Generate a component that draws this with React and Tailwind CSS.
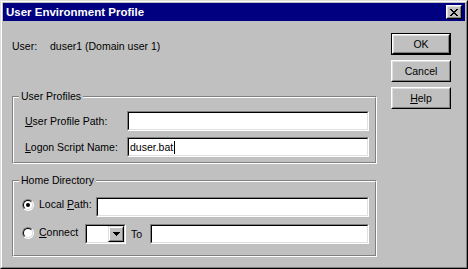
import React from "react";

const FONT = "font-['Liberation_Sans',Arial,sans-serif]";

// sunken 2px text field
function Field({ width, children }) {
  return (
    <div
      className={`h-[20px] shrink-0 border border-t-[#808080] border-l-[#808080] border-b-white border-r-white`}
      style={{ width }}
    >
      <div className="h-full border border-t-black border-l-black border-b-[#dfdfdf] border-r-[#dfdfdf] bg-white flex items-center pl-[1px] text-black">
        {children}
      </div>
    </div>
  );
}

function Radio({ checked }) {
  return (
    <span className="block w-[12px] h-[12px] shrink-0 rounded-full border border-t-[#808080] border-l-[#808080] border-b-white border-r-white">
      <span className="flex w-full h-full items-center justify-center rounded-full border border-t-black border-l-black border-b-[#dfdfdf] border-r-[#dfdfdf] bg-white">
        {checked && <span className="block w-[4px] h-[4px] rounded-full bg-black" />}
      </span>
    </span>
  );
}

function Button({ children, isDefault }) {
  const bevel = (
    <div className="h-full border border-t-white border-l-white border-b-black border-r-black">
      <div className="h-full border border-t-[#dfdfdf] border-l-[#dfdfdf] border-b-[#808080] border-r-[#808080] flex items-center justify-center text-black">
        {children}
      </div>
    </div>
  );
  if (isDefault) {
    return <div className="w-[60px] h-[22px] border border-black">{bevel}</div>;
  }
  return <div className="w-[60px] h-[22px]">{bevel}</div>;
}

function GroupBox({ label, className, children }) {
  return (
    <div className="relative border border-t-[#808080] border-l-[#808080] border-b-white border-r-white">
      <span className="absolute -top-[7px] left-[6px] bg-[#c0c0c0] px-[2px] leading-[13px] text-black">
        {label}
      </span>
      <div className={`border border-t-white border-l-white border-b-[#808080] border-r-[#808080] ${className}`}>
        {children}
      </div>
    </div>
  );
}

function CloseGlyph() {
  return (
    <svg width="8" height="7" viewBox="0 0 8 7" shapeRendering="crispEdges">
      <path
        d="M0 0h2v1h-2z M6 0h2v1h-2z M1 1h2v1h-2z M5 1h2v1h-2z M2 2h4v1h-4z M3 3h2v1h-2z M2 4h4v1h-4z M1 5h2v1h-2z M5 5h2v1h-2z M0 6h2v1h-2z M6 6h2v1h-2z"
        fill="#000"
      />
    </svg>
  );
}

function DownArrow() {
  return (
    <svg width="7" height="4" viewBox="0 0 7 4" shapeRendering="crispEdges">
      <path d="M0 0h7v1h-7z M1 1h5v1h-5z M2 2h3v1h-3z M3 3h1v1h-1z" fill="#000" />
    </svg>
  );
}

export default function App() {
  return (
    <div className={`w-[468px] h-[269px] bg-[#c0c0c0] text-[10.5px] leading-[13px] ${FONT} border border-t-[#dfdfdf] border-l-[#dfdfdf] border-b-black border-r-black`}>
      <div className="h-full flex flex-col border border-t-white border-l-white border-b-[#808080] border-r-[#808080] p-[1px]">
        {/* title bar */}
        <div className="h-[18px] shrink-0 bg-[#000080] flex items-center justify-between pl-[3px] pr-[3px]">
          <span className="text-white font-bold text-[11.5px] leading-[14px]">User Environment Profile</span>
          <div className="w-[16px] h-[14px] border border-t-white border-l-white border-b-black border-r-black">
            <div className="h-full border border-t-[#dfdfdf] border-l-[#dfdfdf] border-b-[#808080] border-r-[#808080] bg-[#c0c0c0] flex items-center justify-center">
              <CloseGlyph />
            </div>
          </div>
        </div>

        {/* body */}
        <div className="flex">
          <div className="w-[374px] pl-[9px] flex flex-col">
            <div className="flex mt-[19px] text-black">
              <span className="w-[38px]">User:</span>
              <span>duser1 (Domain user 1)</span>
            </div>

            <div className="mt-[43px]">
              <GroupBox label="User Profiles" className="pt-[13px] pb-[5px] pl-[11px] flex flex-col gap-[6px]">
                <div className="flex items-center">
                  <span className="w-[102px] text-black">
                    <span className="underline">U</span>ser Profile Path:
                  </span>
                  <Field width={242} />
                </div>
                <div className="flex items-center">
                  <span className="w-[102px] text-black">
                    <span className="underline">L</span>ogon Script Name:
                  </span>
                  <Field width={242}>
                    <span>duser.bat</span>
                    <span className="block w-[1px] h-[13px] bg-black ml-[1px]" />
                  </Field>
                </div>
              </GroupBox>
            </div>

            <div className="mt-[16px]">
              <GroupBox label="Home Directory" className="pt-[15px] pb-[11px] pl-[8px] flex flex-col gap-[7px]">
                <div className="flex items-center">
                  <div className="w-[74px] flex items-center gap-[5px] text-black -mt-[5px]">
                    <Radio checked />
                    <span>
                      Local <span className="underline">P</span>ath:
                    </span>
                  </div>
                  <Field width={273} />
                </div>
                <div className="flex items-center">
                  <div className="w-[63px] flex items-center gap-[5px] text-black -mt-[3px]">
                    <Radio />
                    <span>
                      <span className="underline">C</span>onnect
                    </span>
                  </div>
                  <div className="w-[41px] h-[20px] border border-t-[#808080] border-l-[#808080] border-b-white border-r-white">
                    <div className="h-full flex justify-end border border-t-black border-l-black border-b-[#dfdfdf] border-r-[#dfdfdf] bg-white">
                      <div className="w-[16px] h-full border border-t-[#dfdfdf] border-l-[#dfdfdf] border-b-black border-r-black">
                        <div className="h-full border border-t-white border-l-white border-b-[#808080] border-r-[#808080] bg-[#c0c0c0] flex items-center justify-center">
                          <DownArrow />
                        </div>
                      </div>
                    </div>
                  </div>
                  <span className="w-[24px] pl-[5px] text-black">To</span>
                  <Field width={219} />
                </div>
              </GroupBox>
            </div>
          </div>

          <div className="ml-[14px] mt-[12px] flex flex-col gap-[5px]">
            <Button isDefault>OK</Button>
            <Button>Cancel</Button>
            <Button>
              <span>
                <span className="underline">H</span>elp
              </span>
            </Button>
          </div>
        </div>
      </div>
    </div>
  );
}
